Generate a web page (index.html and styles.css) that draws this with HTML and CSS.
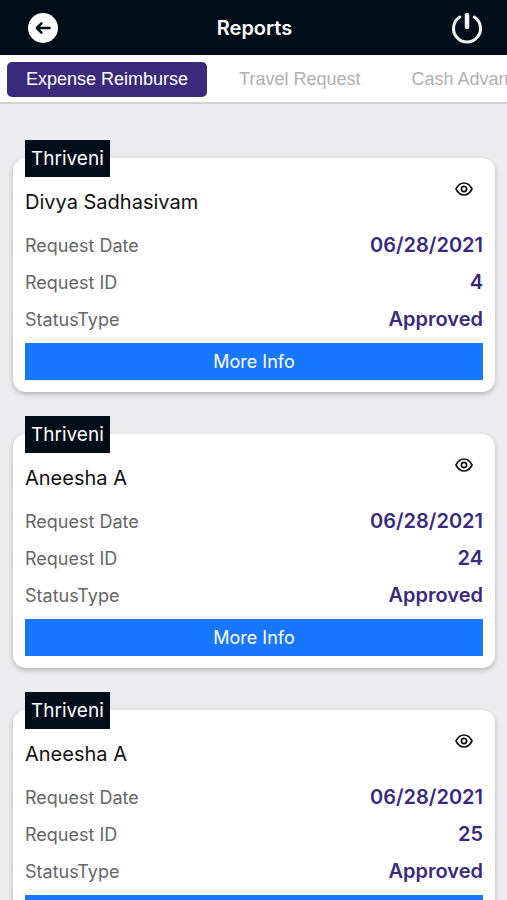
FILE: index.html
```html
<!DOCTYPE html>
<html lang="en">
<head>
<meta charset="utf-8">
<meta name="viewport" content="width=device-width, initial-scale=1">
<title>Reports</title>
<link rel="stylesheet" href="styles.css">
</head>
<body>
<header class="topbar">
  <button class="icon-button" type="button" aria-label="Back">
    <svg width="30" height="30" viewBox="0 0 30 30" fill="none"><circle cx="15" cy="15" r="15" fill="#fff"/><path d="M21.500 15H9M13.500 10.300L8.800 15L13.500 19.700" stroke="#010d18" stroke-width="2.500" stroke-linecap="round" stroke-linejoin="round"/></svg>
  </button>
  <h1 class="title">Reports</h1>
  <button class="icon-button" type="button" aria-label="Log out">
    <svg width="32" height="32" viewBox="0 0 32 32" fill="none" stroke="#f4f6f8" stroke-linecap="round"><path d="M8.800 5A13.500 13.500 0 1 0 23.200 5" stroke-width="3"/><path d="M16 3V15" stroke-width="4.500"/></svg>
  </button>
</header>
<nav class="tabs">
  <a class="tab active" href="#expense" aria-current="page">Expense Reimburse</a>
  <a class="tab" href="#travel">Travel Request</a>
  <a class="tab" href="#cash">Cash Advance</a>
</nav>
<main class="list">
  <article class="card">
    <span class="tag">Thriveni</span>
    <button class="view" type="button" aria-label="View request"><svg width="18" height="14" viewBox="0 0 18 14" fill="none" stroke="#111" stroke-width="1.700"><path d="M1 7C3 3 5.700 1 9 1S15 3 17 7C15 11 12.300 13 9 13S3 11 1 7Z"/><circle cx="9" cy="7" r="2.600"/></svg></button>
    <h2 class="name">Divya Sadhasivam</h2>
    <dl class="details">
      <dt>Request Date</dt><dd>06/28/2021</dd>
      <dt>Request ID</dt><dd>4</dd>
      <dt>StatusType</dt><dd>Approved</dd>
    </dl>
    <button class="more" type="button">More Info</button>
  </article>
  <article class="card">
    <span class="tag">Thriveni</span>
    <button class="view" type="button" aria-label="View request"><svg width="18" height="14" viewBox="0 0 18 14" fill="none" stroke="#111" stroke-width="1.700"><path d="M1 7C3 3 5.700 1 9 1S15 3 17 7C15 11 12.300 13 9 13S3 11 1 7Z"/><circle cx="9" cy="7" r="2.600"/></svg></button>
    <h2 class="name">Aneesha A</h2>
    <dl class="details">
      <dt>Request Date</dt><dd>06/28/2021</dd>
      <dt>Request ID</dt><dd>24</dd>
      <dt>StatusType</dt><dd>Approved</dd>
    </dl>
    <button class="more" type="button">More Info</button>
  </article>
  <article class="card">
    <span class="tag">Thriveni</span>
    <button class="view" type="button" aria-label="View request"><svg width="18" height="14" viewBox="0 0 18 14" fill="none" stroke="#111" stroke-width="1.700"><path d="M1 7C3 3 5.700 1 9 1S15 3 17 7C15 11 12.300 13 9 13S3 11 1 7Z"/><circle cx="9" cy="7" r="2.600"/></svg></button>
    <h2 class="name">Aneesha A</h2>
    <dl class="details">
      <dt>Request Date</dt><dd>06/28/2021</dd>
      <dt>Request ID</dt><dd>25</dd>
      <dt>StatusType</dt><dd>Approved</dd>
    </dl>
    <button class="more" type="button">More Info</button>
  </article>
</main>
</body>
</html>
```
FILE: styles.css
```css
* {
  box-sizing: border-box;
}

body {
  margin: 0;
  height: 100vh;
  display: flex;
  flex-direction: column;
  background: #ececee;
  font-family: Inter, "Liberation Sans", sans-serif;
}

button {
  border: 0;
  padding: 0;
  background: none;
  font: inherit;
  cursor: pointer;
}

svg {
  display: block;
}

.topbar {
  flex: none;
  display: flex;
  align-items: center;
  justify-content: space-between;
  height: 55px;
  padding: 0 24px 0 28px;
  background: #010d18;
}

.title {
  margin: 0;
  color: #fff;
  font-size: 20px;
  line-height: 24px;
  font-weight: 600;
}

.tabs {
  flex: none;
  display: flex;
  gap: 13px;
  padding: 7px 7px 5px;
  overflow: hidden;
  background: #fff;
  border-bottom: 2px solid #d2d2d5;
}

.tab {
  flex: none;
  padding: 0 19px;
  border-radius: 5px;
  color: #b0b0b0;
  font-family: "Liberation Sans", sans-serif;
  font-size: 18px;
  line-height: 35px;
  text-decoration: none;
  white-space: nowrap;
}

.tab.active {
  background: #3b2a7c;
  color: #fff;
}

.list {
  flex: 1;
  min-height: 0;
  padding: 54px 12px 0 13px;
  overflow-y: auto;
  scrollbar-width: none;
}

.card {
  display: grid;
  grid-template-columns: 1fr auto;
  margin-bottom: 42px;
  padding: 0 12px 12px;
  border-radius: 13px;
  background: #fff;
  box-shadow: 0 2px 5px rgba(0, 0, 0, 0.25);
}

.tag {
  justify-self: start;
  margin-top: -18px;
  padding: 0 6px;
  background: #010d18;
  color: #fff;
  font-size: 19px;
  line-height: 37px;
}

.view {
  grid-column: 2;
  grid-row: 1 / span 2;
  align-self: start;
  margin: 24px 10px 0 0;
}

.name {
  margin: 7px 0 6px;
  color: #111;
  font-size: 20px;
  line-height: 37px;
  font-weight: 400;
}

.details {
  grid-column: 1 / -1;
  display: grid;
  grid-template-columns: 1fr auto;
  margin: 0 0 5px;
  line-height: 37px;
}

.details dt {
  color: #666;
  font-size: 18px;
}

.details dd {
  margin: 0;
  color: #3b2a7c;
  font-size: 20px;
  font-weight: 600;
  text-align: right;
}

.more {
  grid-column: 1 / -1;
  background: #1877ff;
  color: #fff;
  font-size: 18px;
  line-height: 37px;
}
```
